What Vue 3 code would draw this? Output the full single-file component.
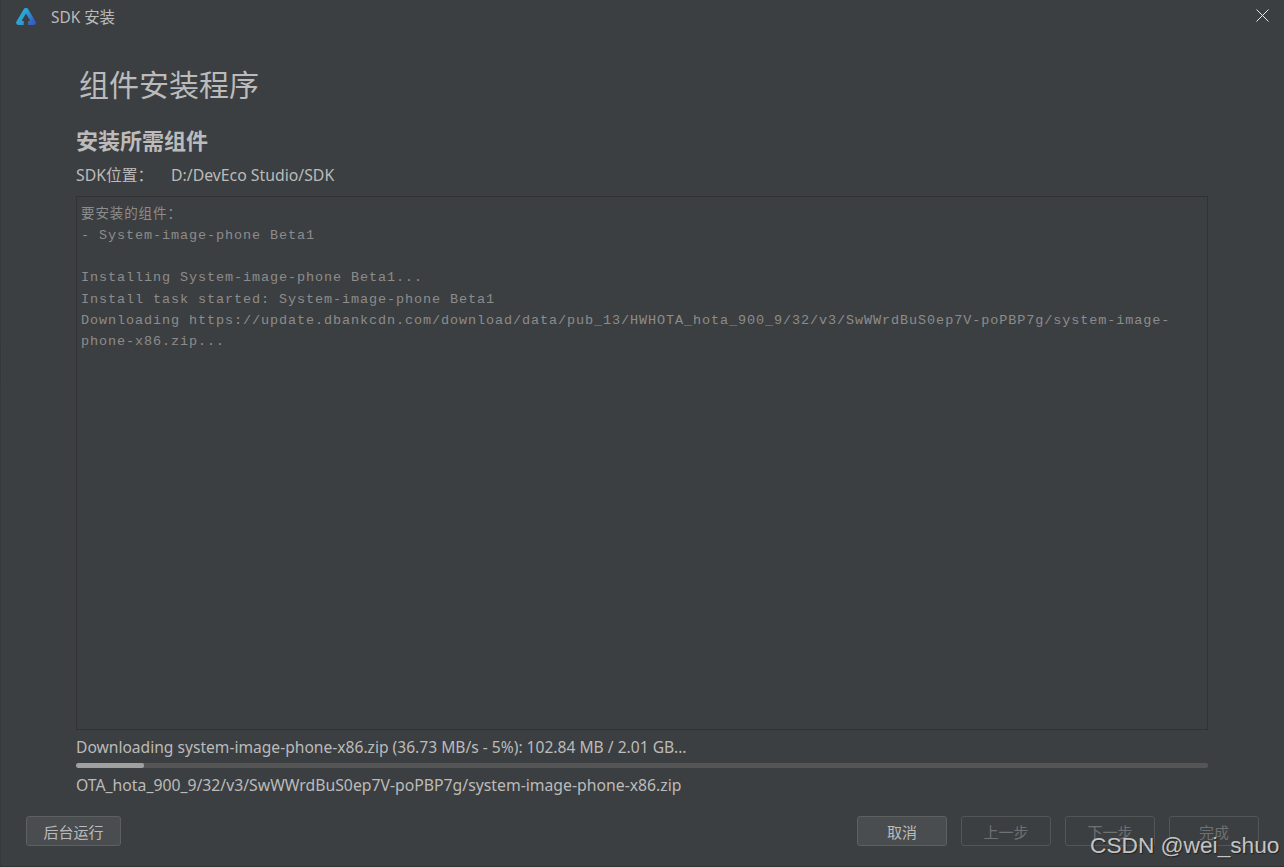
<script setup>
const lines = [
  '要安装的组件：',
  '- System-image-phone Beta1',
  '',
  'Installing System-image-phone Beta1...',
  'Install task started: System-image-phone Beta1',
  'Downloading https://update.dbankcdn.com/download/data/pub_13/HWHOTA_hota_900_9/32/v3/SwWWrdBuS0ep7V-poPBP7g/system-image-phone-x86.zip...'
]
const progress = 6
</script>

<template>
  <div class="window">
    <header class="titlebar">
      <svg class="logo" width="20" height="17" viewBox="0 0 20 17">
        <defs>
          <linearGradient id="lg" x1="0" y1="0" x2="1" y2="0.5">
            <stop offset="0" stop-color="#2fb4d8" />
            <stop offset="0.55" stop-color="#2a9fd6" />
            <stop offset="1" stop-color="#3560c8" />
          </linearGradient>
        </defs>
        <path d="M7.6 1.4c1-1.8 3.8-1.8 4.8 0l7.1 12.2c1 1.6-.2 3.4-2 3.4H2.5c-1.8 0-3-1.8-2-3.4z" fill="url(#lg)" />
        <path d="M10 5.6L5.6 13h2.2v4h4.4v-4h2.2z" fill="#3c3f41" />
      </svg>
      <span class="title">SDK 安装</span>
      <svg class="close" width="13" height="13" viewBox="0 0 13 13">
        <path d="M.5.5l12 12M12.5.5l-12 12" stroke="#e8e8e8" stroke-width="1" fill="none" />
      </svg>
    </header>

    <main class="content">
      <h1 class="heading">组件安装程序</h1>
      <h2 class="subheading">安装所需组件</h2>
      <div class="location">
        <span class="loc-label">SDK位置：</span>
        <span>D:/DevEco Studio/SDK</span>
      </div>
      <div class="log">
        <div v-for="(line, i) in lines" :key="i" class="log-line">{{ line }}</div>
      </div>
      <div class="status">Downloading system-image-phone-x86.zip (36.73 MB/s - 5%): 102.84 MB / 2.01 GB...</div>
      <div class="track"><div class="fill" :style="{ width: progress + '%' }"></div></div>
      <div class="path">OTA_hota_900_9/32/v3/SwWWrdBuS0ep7V-poPBP7g/system-image-phone-x86.zip</div>
    </main>

    <footer class="footer">
      <button class="btn wide">后台运行</button>
      <div class="spacer"></div>
      <button class="btn">取消</button>
      <button class="btn disabled">上一步</button>
      <button class="btn disabled">下一步</button>
      <button class="btn disabled">完成</button>
    </footer>

    <div class="watermark">CSDN @wei_shuo</div>
    <div class="edge-blue"></div>
    <div class="edge-bottom"></div>
  </div>
</template>

<style scoped>
.window {
  position: relative;
  width: 1284px;
  height: 867px;
  box-sizing: border-box;
  background: #3c3f41;
  color: #bbbbbb;
  font-family: "Noto Sans", "Noto Sans CJK SC", sans-serif;
  display: flex;
  flex-direction: column;
  overflow: hidden;
  border-left: 1px solid #35383a;
  border-bottom: 1px solid #2f3133;
}
.titlebar {
  height: 36px;
  flex: none;
  display: flex;
  align-items: center;
  padding-left: 15px;
  padding-right: 15px;
  box-sizing: border-box;
}
.logo { margin-right: 15px; margin-top: -4px; }
.title { font-size: 15.4px; line-height: 20px; margin-top: -1px; }
.close { margin-left: auto; margin-top: -5px; }
.content {
  padding: 0 76px 0 75px;
  display: flex;
  flex-direction: column;
  flex: 1;
  min-height: 0;
}
.heading {
  margin: 27px 0 0 3px;
  font-size: 30px;
  line-height: 44px;
  font-weight: 400;
  color: #bbbbbb;
}
.subheading {
  margin: 18px 0 0;
  font-size: 22px;
  line-height: 30px;
  font-weight: 700;
  color: #bbbbbb;
}
.location {
  margin-top: 10px;
  font-size: 15.8px;
  line-height: 20px;
  display: flex;
}
.loc-label { width: 95px; }
.log {
  margin-top: 11px;
  height: 534px;
  box-sizing: border-box;
  border: 1px solid #323232;
  padding: 6.5px 4px;
  font-family: "Liberation Mono", "Noto Sans CJK SC", monospace;
  font-size: 13.5px;
  letter-spacing: 0.9px;
  line-height: 21.3px;
  color: #8c8c8c;
}
.log-line {
  min-height: 21.3px;
  white-space: pre-wrap;
}
.status {
  margin-top: 7px;
  font-size: 15.6px;
  line-height: 20px;
}
.track {
  margin-top: 6px;
  height: 5px;
  border-radius: 2px;
  background: #555555;
  overflow: hidden;
}
.fill {
  height: 100%;
  background: #a0a0a0;
  border-radius: 2px;
}
.path {
  margin-top: 7px;
  font-size: 15.78px;
  line-height: 20px;
}
.footer {
  flex: none;
  display: flex;
  gap: 14px;
  padding: 0 25px 20px 25px;
  margin-top: 20px;
}
.spacer { flex: 1; }
.btn {
  width: 90px;
  height: 30px;
  box-sizing: border-box;
  border: 1px solid #5e6060;
  border-radius: 3px;
  background: #4a4d4f;
  color: #bbbbbb;
  font-family: "Noto Sans CJK SC", sans-serif;
  font-size: 15px;
  padding: 0;
}
.btn.wide { width: 95px; }
.btn.disabled {
  background: transparent;
  border-color: #535657;
  color: #6f7172;
}
.watermark {
  position: absolute;
  left: 1089px;
  top: 831px;
  font-family: "Liberation Sans", Arial, sans-serif;
  font-size: 22.7px;
  line-height: 28px;
  color: #c4c4c4;
  text-shadow: 1px 1px 1px #222;
  white-space: nowrap;
}
.edge-blue {
  position: absolute;
  left: -1px;
  top: 340px;
  width: 2px;
  height: 48px;
  background: #17477f;
}
.edge-bottom {
  position: absolute;
  left: 261px;
  right: 0;
  bottom: -1px;
  height: 1px;
  background: #8a8c8d;
}
</style>
